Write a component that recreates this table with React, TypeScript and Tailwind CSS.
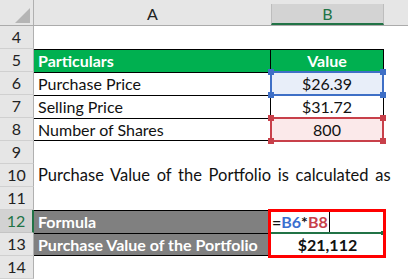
import React from "react";

const F = { fontFamily: "Lato, 'Liberation Sans', sans-serif" };

function RowHead({ n, selected }: { n: number; selected?: boolean }) {
  return (
    <div
      className={
        "w-[34px] shrink-0 h-full flex items-center justify-center border-b border-r " +
        (selected
          ? "bg-[#d2d2d2] text-[#217346] border-b-[#c4c4c4] border-r-2 border-r-[#217346]"
          : "bg-[#e6e6e6] text-[#222] border-b-[#d0d0d0] border-r-[#b0b0b0]")
      }
    >
      <span className="text-[16px] leading-none">{n}</span>
    </div>
  );
}

function Row({ n, children, selected }: { n: number; children?: React.ReactNode; selected?: boolean }) {
  return (
    <div className="flex h-[23px] relative">
      <RowHead n={n} selected={selected} />
      {children}
    </div>
  );
}

function Corner({ x, y, c }: { x: number; y: number; c: string }) {
  return <div className={"absolute w-[6px] h-[6px] " + c} style={{ left: x - 3, top: y - 3 }} />;
}

export default function App() {
  return (
    <div className="w-[408px] h-[279px] bg-white overflow-hidden relative text-[#111]" style={F}>
      {/* column header */}
      <div className="flex h-[26px] bg-[#e6e6e6] border-b border-[#ababab]">
        <div className="w-[34px] shrink-0 border-r border-[#b0b0b0] relative">
          <div
            className="absolute left-[15px] top-[8px] w-[15px] h-[15px] bg-[#b5b5b5]"
            style={{ clipPath: "polygon(100% 0, 100% 100%, 0 100%)" }}
          />
        </div>
        <div className="w-[237px] shrink-0 flex items-center justify-center pt-[2px] text-[16px] text-[#222]">A</div>
        <div className="w-[113px] shrink-0 mt-[4px] bg-[#d3d3d3] border-x border-[#bdbdbd] border-b-2 border-b-[#217346] flex items-center justify-center text-[16px] text-[#217346]">
          B
        </div>
        <div className="flex-1" />
      </div>

      <Row n={4} />
      <Row n={5}>
        <div className="w-[237px] shrink-0 bg-[#00b050] border-t border-r border-black pl-[4px] flex items-center text-white font-bold text-[16px]">
          Particulars
        </div>
        <div className="w-[113px] shrink-0 bg-[#00b050] border-t border-r border-black flex items-center justify-center text-white font-bold text-[16px]">
          Value
        </div>
      </Row>
      <Row n={6}>
        <div className="w-[237px] shrink-0 border-t border-r border-black pl-[4px] flex items-center text-[16px]">Purchase Price</div>
        <div className="w-[113px] shrink-0 bg-[#e8eef9] border-t border-r border-black flex items-center justify-center text-[16px]">$26.39</div>
      </Row>
      <Row n={7}>
        <div className="w-[237px] shrink-0 border-t border-r border-black pl-[4px] flex items-center text-[16px]">Selling Price</div>
        <div className="w-[113px] shrink-0 border-t border-r border-black flex items-center justify-center text-[16px]">$31.72</div>
      </Row>
      <Row n={8}>
        <div className="w-[237px] shrink-0 border-y border-r border-black pl-[4px] flex items-center text-[16px]">Number of Shares</div>
        <div className="w-[113px] shrink-0 bg-[#fbe9ea] border-y border-r border-black flex items-center justify-center text-[16px]">800</div>
      </Row>
      <Row n={9} />
      <Row n={10}>
        <div className="pl-[4px] flex items-center text-[16.5px] whitespace-nowrap [word-spacing:2.5px]">
          Purchase Value of the Portfolio is calculated as
        </div>
      </Row>
      <Row n={11} />
      <Row n={12} selected>
        <div className="w-[237px] shrink-0 bg-[#808080] border-t border-r border-black pl-[4px] flex items-center text-white font-bold text-[16px]">
          Formula
        </div>
        <div className="w-[113px] shrink-0 flex items-center pl-[1px] font-bold text-[16px]">
          <span>=</span>
          <span className="text-[#3a6fd0]">B6</span>
          <span>*</span>
          <span className="text-[#c8404a]">B8</span>
          <span className="ml-[1px] w-px h-[22px] bg-black" />
        </div>
      </Row>
      <Row n={13}>
        <div className="w-[237px] shrink-0 bg-[#808080] border-y border-r border-black pl-[4px] flex items-center text-white font-bold text-[16px] whitespace-nowrap">
          Purchase Value of the Portfolio
        </div>
        <div className="w-[113px] shrink-0 flex items-center justify-center font-bold text-[16px]">$21,112</div>
      </Row>
      <Row n={14} />

      {/* B6 selection (blue) */}
      <div className="absolute left-[270px] top-[71px] w-[114px] h-[25px] border-2 border-[#3e6fc6]" />
      <Corner x={271} y={72} c="bg-[#3e6fc6]" />
      <Corner x={383} y={72} c="bg-[#3e6fc6]" />
      <Corner x={271} y={95} c="bg-[#3e6fc6]" />
      <Corner x={383} y={95} c="bg-[#3e6fc6]" />

      {/* B8 selection (red) */}
      <div className="absolute left-[270px] top-[117px] w-[114px] h-[25px] border-2 border-[#c8404a]" />
      <Corner x={271} y={118} c="bg-[#c8404a]" />
      <Corner x={383} y={118} c="bg-[#c8404a]" />
      <Corner x={271} y={141} c="bg-[#c8404a]" />
      <Corner x={383} y={141} c="bg-[#c8404a]" />

      {/* active cell bottom line */}
      <div className="absolute left-[271px] top-[232px] w-[112px] h-[2px] bg-[#217346]" />
      <div className="absolute left-[381px] top-[231px] w-[4px] h-[4px] bg-[#217346]" />

      {/* red highlight box */}
      <div className="absolute left-[268px] top-[209px] w-[118px] h-[49px] border-[3px] border-[#ff0000]" />
    </div>
  );
}
